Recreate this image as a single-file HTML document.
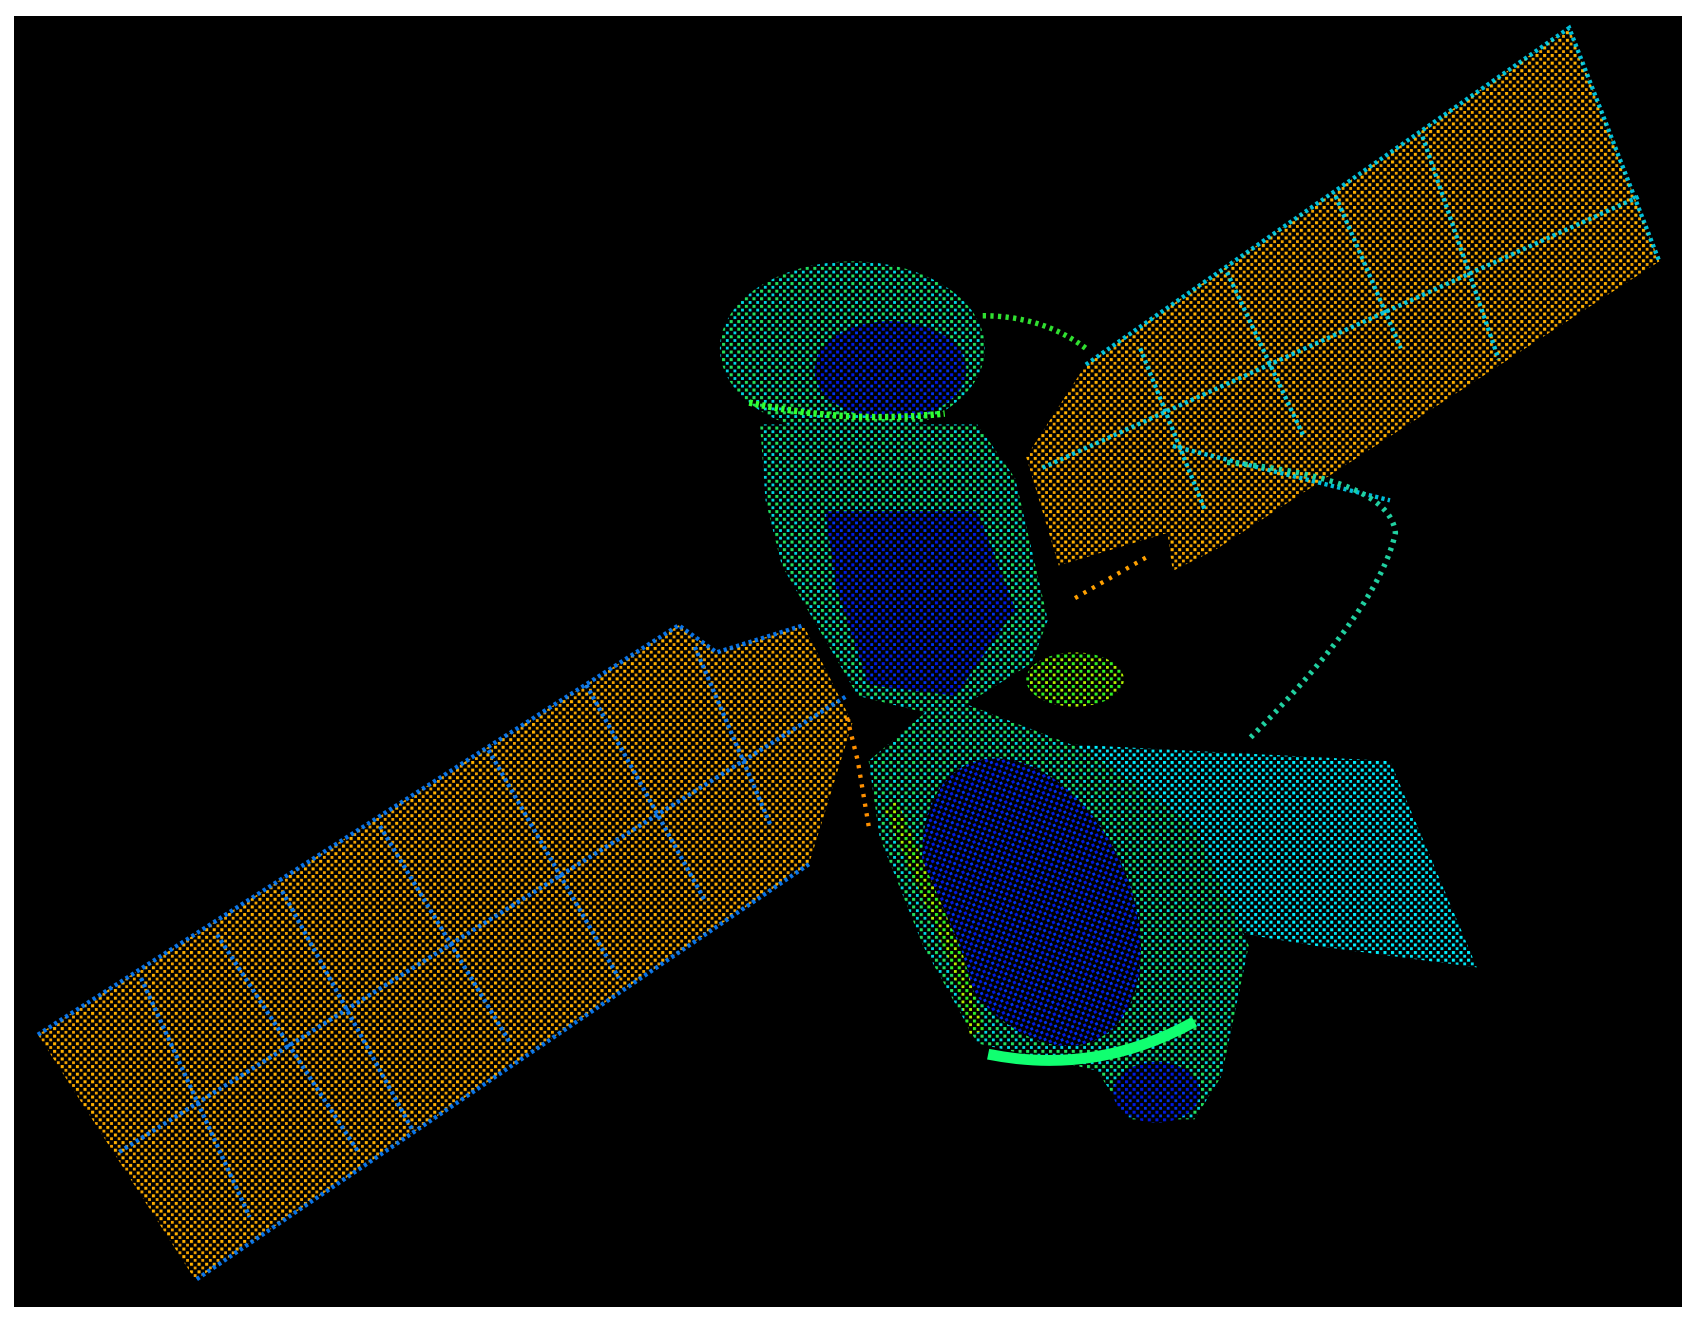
<!DOCTYPE html>
<html><head><meta charset="utf-8"><style>html,body{margin:0;padding:0;background:#fff;width:1702px;height:1320px;overflow:hidden}svg{display:block}</style></head>
<body>
<svg width="1702" height="1320" viewBox="0 0 1702 1320" xmlns="http://www.w3.org/2000/svg">
<defs>
<pattern id="po" width="7" height="7" patternUnits="userSpaceOnUse"><rect width="7" height="7" fill="#000"/><rect x="0" y="0" width="2.8" height="2.8" fill="#ffb000"/><rect x="3.5" y="3.5" width="2.6" height="2.6" fill="#f0a000"/></pattern>
<pattern id="pc" width="7" height="7" patternUnits="userSpaceOnUse"><rect width="7" height="7" fill="#000"/><rect x="0" y="0" width="2.8" height="2.8" fill="#00f0ff"/><rect x="3.5" y="3.5" width="2.6" height="2.6" fill="#00e0f0"/></pattern>
<pattern id="pb" width="7" height="7" patternUnits="userSpaceOnUse"><rect width="7" height="7" fill="#000"/><rect x="0" y="0" width="2.8" height="2.8" fill="#0018e0"/><rect x="3.5" y="3.5" width="2.6" height="2.6" fill="#0030f0"/></pattern>
<pattern id="pg" width="7" height="7" patternUnits="userSpaceOnUse"><rect width="7" height="7" fill="#000"/><rect x="0" y="0" width="2.8" height="2.8" fill="#20e060"/><rect x="3.5" y="3.5" width="2.6" height="2.6" fill="#00d8e0"/></pattern>
<pattern id="pgr" width="7" height="7" patternUnits="userSpaceOnUse"><rect width="7" height="7" fill="#000"/><rect x="0" y="0" width="2.8" height="2.8" fill="#30f020"/><rect x="3.5" y="3.5" width="2.6" height="2.6" fill="#b0f000"/></pattern>
</defs>
<rect x="14" y="16" width="1668" height="1291" fill="#000"/>
<g transform="translate(14,16) scale(1.086) translate(-13,-14)">
<polygon points="35,952 625,575 660,600 740,575 785,665 745,795 180,1178" fill="url(#po)"/>
<g stroke="#0a80ff" stroke-width="4" stroke-dasharray="3 3" fill="none" opacity="0.9">
<polyline points="35,952 625,575 660,600 740,575"/>
<polyline points="745,795 180,1178"/>
<line x1="110" y1="1060" x2="780" y2="640"/>
<line x1="200" y1="860" x2="330" y2="1060"/>
<line x1="350" y1="760" x2="470" y2="960"/>
<line x1="450" y1="690" x2="570" y2="900"/>
<line x1="540" y1="630" x2="650" y2="830"/>
<line x1="260" y1="820" x2="380" y2="1040"/>
<line x1="640" y1="595" x2="710" y2="760"/>
<line x1="130" y1="900" x2="230" y2="1120"/>
</g>
<polygon points="1000,335 1445,25 1528,240 1120,505 1080,525 1075,490 975,520 945,420" fill="url(#po)"/>
<g stroke="#00e0ff" stroke-width="4" stroke-dasharray="3 3" fill="none" opacity="0.85">
<polyline points="1000,335 1445,25 1528,240"/>
<line x1="960" y1="430" x2="1510" y2="180"/>
<line x1="1230" y1="180" x2="1290" y2="320"/>
<line x1="1310" y1="125" x2="1380" y2="330"/>
<line x1="1130" y1="250" x2="1200" y2="400"/>
<line x1="1050" y1="320" x2="1110" y2="470"/>
<line x1="1080" y1="410" x2="1280" y2="460"/>
</g>
<polygon points="990,685 1280,700 1360,890 1210,870 1150,860 1100,830 1010,770" fill="url(#pc)"/>
<ellipse cx="785" cy="320" rx="122" ry="80" fill="url(#pg)"/>
<ellipse cx="820" cy="340" rx="70" ry="45" fill="url(#pb)"/>
<path d="M690,370 Q780,390 870,380" stroke="#30ff30" stroke-width="6" stroke-dasharray="3 3" fill="none"/>
<polygon points="700,390 900,390 935,440 965,570 950,610 870,660 790,640 720,520 705,460" fill="url(#pg)"/>
<polygon points="760,470 900,470 935,560 880,640 800,630 770,540" fill="url(#pb)"/>
<polygon points="800,700 870,640 1000,690 1100,760 1150,870 1125,990 1100,1030 1040,1030 1010,985 900,960 850,870 810,770" fill="url(#pg)"/>
<ellipse cx="950" cy="830" rx="90" ry="140" transform="rotate(-25 950 830)" fill="url(#pb)"/>
<ellipse cx="1065" cy="1005" rx="40" ry="28" fill="url(#pb)"/>
<path d="M910,970 Q1010,990 1100,940" stroke="#10ff70" stroke-width="10" fill="none"/>
<path d="M820,740 L880,880 L900,950" stroke="url(#pgr)" stroke-width="14" fill="none"/>
<ellipse cx="990" cy="625" rx="45" ry="25" fill="url(#pgr)"/>
<path d="M905,290 Q960,290 1000,320" stroke="#30e030" stroke-width="5" stroke-dasharray="3 4" fill="none"/>
<path d="M1130,425 Q1280,440 1285,490 Q1270,560 1150,680" stroke="#20d0a0" stroke-width="5" stroke-dasharray="3 5" fill="none"/>
<path d="M990,550 L1060,510" stroke="#ffa000" stroke-width="4" stroke-dasharray="3 6" fill="none"/>
<path d="M780,660 L790,700 L800,760" stroke="#ff9000" stroke-width="4" stroke-dasharray="3 6" fill="none"/>
</g>
</svg>
</body></html>
